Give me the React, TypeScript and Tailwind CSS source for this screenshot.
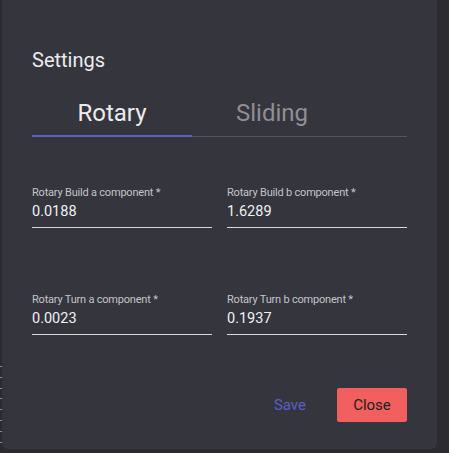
import { useState } from 'react'

const fields = [
  [
    { label: 'Rotary Build a component *', value: '0.0188' },
    { label: 'Rotary Build b component *', value: '1.6289' },
  ],
  [
    { label: 'Rotary Turn a component *', value: '0.0023' },
    { label: 'Rotary Turn b component *', value: '0.1937' },
  ],
]

function Field({ label, value }: { label: string; value: string }) {
  return (
    <div className="flex flex-col">
      <label className="text-[11px] leading-[14px] tracking-[-0.2px] text-[#c4c4c8]">{label}</label>
      <div className="mt-[3px] pb-[6px] text-[14.5px] leading-[18px] text-[#f0f0f2] border-b border-[#d8d8dc]">
        {value}
      </div>
    </div>
  )
}

export default function App() {
  const [tab, setTab] = useState(0)

  return (
    <div
      className="flex w-[449px] h-[453px] bg-[#2b2b30] overflow-hidden"
      style={{ fontFamily: 'Roboto, "Noto Sans", sans-serif' }}
    >
      {/* bits of the chart behind the dialog */}
      <div className="w-[2px] shrink-0 pt-[366px] flex flex-col gap-[9.8px]">
        {Array.from({ length: 8 }).map((_, i) => (
          <div key={i} className="h-px bg-[#8a8a90]" />
        ))}
      </div>

      <div className="mt-[-4px] w-[435px] h-[453px] shrink-0 rounded-md bg-[#35353d] px-[30px] pt-[52px]">
        <h2 className="text-[20px] leading-[24px] text-[#ececee]">Settings</h2>

        <div className="mt-[18px] flex border-b border-[#55555c]">
          {['Rotary', 'Sliding'].map((t, i) => (
            <button
              key={t}
              onClick={() => setTab(i)}
              className={`w-[160px] h-[47px] pt-[9px] flex justify-center items-start text-[24px] leading-[28px] -mb-px border-b-2 ${
                tab === i ? 'text-[#ececee] border-[#5b5ec7]' : 'text-[#8f8f95] border-transparent'
              }`}
            >
              {t}
            </button>
          ))}
        </div>

        <div className="mt-[49px] flex flex-col gap-[65px]">
          {fields.map((row, r) => (
            <div key={r} className="grid grid-cols-2 gap-x-[15px]">
              {row.map((f) => (
                <Field key={f.label} {...f} />
              ))}
            </div>
          ))}
        </div>

        <div className="mt-[53px] flex justify-end items-center gap-[31px]">
          <button className="text-[15px] text-[#5b5ec7]">Save</button>
          <button className="w-[70px] h-[34px] rounded-[2px] bg-[#f25f5f] text-[15px] text-[#1e1e22]">Close</button>
        </div>
      </div>
    </div>
  )
}
